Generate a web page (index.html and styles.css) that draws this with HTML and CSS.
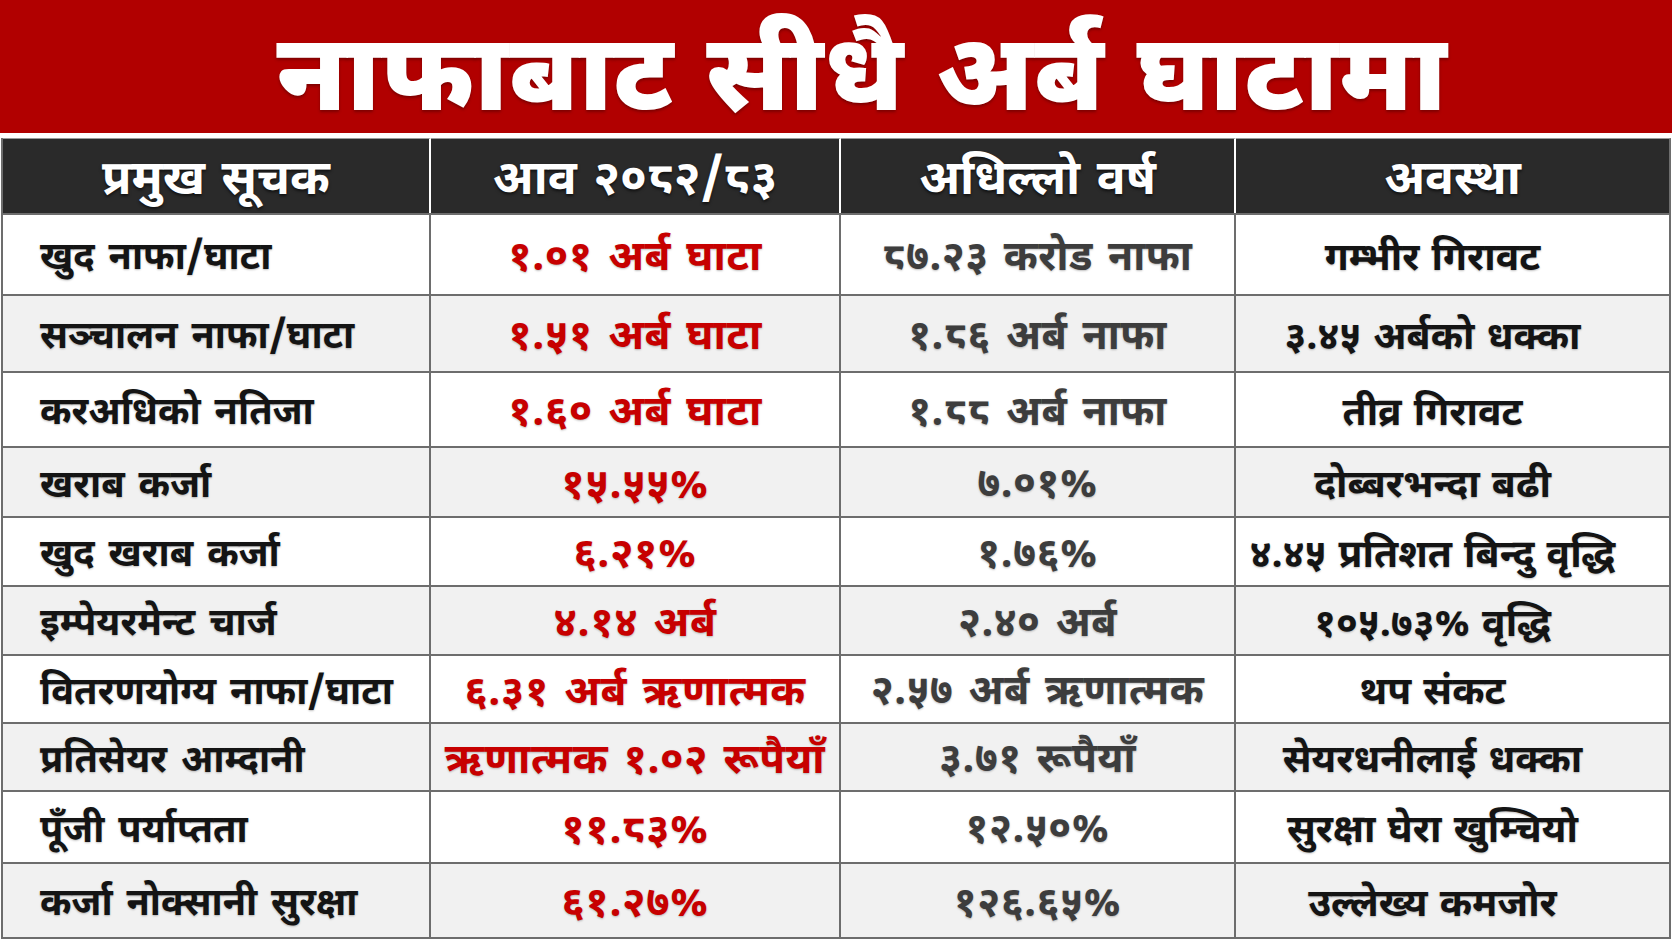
FILE: index.html
```html
<!DOCTYPE html>
<html lang="ne">
<head>
<meta charset="utf-8">
<title>नाफाबाट सीधै अर्ब घाटामा</title>
<link rel="stylesheet" href="styles.css">
</head>
<body>
<div class="page">
  <header class="banner">
    <h1 class="title">नाफाबाट सीधै अर्ब घाटामा</h1>
  </header>
  <div class="table">
    <div class="row head">
      <div class="cell">प्रमुख सूचक</div>
      <div class="cell">आव २०८२/८३</div>
      <div class="cell">अधिल्लो वर्ष</div>
      <div class="cell">अवस्था</div>
    </div>
    <div class="row">
      <div class="cell label">खुद नाफा/घाटा</div>
      <div class="cell now">१.०१ अर्ब घाटा</div>
      <div class="cell prev">८७.२३ करोड नाफा</div>
      <div class="cell status">गम्भीर गिरावट</div>
    </div>
    <div class="row alt">
      <div class="cell label">सञ्चालन नाफा/घाटा</div>
      <div class="cell now">१.५१ अर्ब घाटा</div>
      <div class="cell prev">१.८६ अर्ब नाफा</div>
      <div class="cell status">३.४५ अर्बको धक्का</div>
    </div>
    <div class="row">
      <div class="cell label">करअधिको नतिजा</div>
      <div class="cell now">१.६० अर्ब घाटा</div>
      <div class="cell prev">१.८८ अर्ब नाफा</div>
      <div class="cell status">तीव्र गिरावट</div>
    </div>
    <div class="row alt">
      <div class="cell label">खराब कर्जा</div>
      <div class="cell now">१५.५५%</div>
      <div class="cell prev">७.०१%</div>
      <div class="cell status">दोब्बरभन्दा बढी</div>
    </div>
    <div class="row">
      <div class="cell label">खुद खराब कर्जा</div>
      <div class="cell now">६.२१%</div>
      <div class="cell prev">१.७६%</div>
      <div class="cell status">४.४५ प्रतिशत बिन्दु वृद्धि</div>
    </div>
    <div class="row alt">
      <div class="cell label">इम्पेयरमेन्ट चार्ज</div>
      <div class="cell now">४.१४ अर्ब</div>
      <div class="cell prev">२.४० अर्ब</div>
      <div class="cell status">१०५.७३% वृद्धि</div>
    </div>
    <div class="row">
      <div class="cell label">वितरणयोग्य नाफा/घाटा</div>
      <div class="cell now">६.३१ अर्ब ऋणात्मक</div>
      <div class="cell prev">२.५७ अर्ब ऋणात्मक</div>
      <div class="cell status">थप संकट</div>
    </div>
    <div class="row alt">
      <div class="cell label">प्रतिसेयर आम्दानी</div>
      <div class="cell now">ऋणात्मक १.०२ रूपैयाँ</div>
      <div class="cell prev">३.७१ रूपैयाँ</div>
      <div class="cell status">सेयरधनीलाई धक्का</div>
    </div>
    <div class="row">
      <div class="cell label">पूँजी पर्याप्तता</div>
      <div class="cell now">११.८३%</div>
      <div class="cell prev">१२.५०%</div>
      <div class="cell status">सुरक्षा घेरा खुम्चियो</div>
    </div>
    <div class="row alt">
      <div class="cell label">कर्जा नोक्सानी सुरक्षा</div>
      <div class="cell now">६१.२७%</div>
      <div class="cell prev">१२६.६५%</div>
      <div class="cell status">उल्लेख्य कमजोर</div>
    </div>
  </div>
</div>
</body>
</html>
```

FILE: styles.css
```css
html, body {
  margin: 0;
  padding: 0;
  background: #ffffff;
}

body {
  font-family: "Noto Sans Devanagari", "Lohit Devanagari", "Mukta", "FreeSans", "Noto Sans", sans-serif;
  width: 1672px;
  height: 941px;
  overflow: hidden;
}

.page {
  display: flex;
  flex-direction: column;
  gap: 5px;
}

.banner {
  height: 133px;
  background: #b10000;
  display: flex;
  align-items: center;
  justify-content: center;
  padding-left: 52px;
  padding-top: 35px;
  box-sizing: border-box;
}

.title {
  margin: 0;
  color: #ffffff;
  font-size: 107px;
  font-weight: 900;
  line-height: 1;
  letter-spacing: 1px;
  word-spacing: 3px;
  text-shadow: 0 2px 3px rgba(60, 0, 0, 0.45);
}

.table {
  display: grid;
  grid-template-columns: 428px 410px 395px 435px;
  grid-template-rows: 75px 81px 77px 75px 70px 69px 69px 68px 68px 72px 75px;
  margin-left: 1px;
  border-left: 2px solid #6d6d6d;
  border-bottom: 2px solid #6d6d6d;
  width: max-content;
}

.row {
  display: contents;
}

.cell {
  display: flex;
  align-items: center;
  justify-content: center;
  box-sizing: border-box;
  padding-top: 11px;
  border-right: 2px solid #6d6d6d;
  border-top: 2px solid #6d6d6d;
  font-size: 38px;
  font-weight: 700;
  line-height: 1;
  word-spacing: 4px;
  white-space: nowrap;
  background: #ffffff;
  text-shadow: 0 1px 2px rgba(0, 0, 0, 0.25);
}

.row.alt .cell {
  background: #f1f1f1;
}

.head .cell {
  background: #2a2a2a;
  color: #ffffff;
  font-size: 48px;
  padding-top: 14px;
  padding-right: 0;
  border-top: 1px solid #9a9a9a;
  border-right: 2px solid #ffffff;
  text-shadow: 0 2px 3px rgba(0, 0, 0, 0.6);
}

.head .cell:last-child {
  border-right: 2px solid #6d6d6d;
}

.cell.label {
  justify-content: flex-start;
  padding-left: 37px;
  color: #141414;
}

.cell.now {
  color: #c70000;
  font-size: 42px;
  letter-spacing: 0.5px;
}

.cell.prev {
  color: #3d3d3d;
  font-size: 41px;
  letter-spacing: 0.5px;
}

.cell.status {
  color: #141414;
  font-size: 39px;
  word-spacing: 2px;
  padding-right: 40px;
}
```
